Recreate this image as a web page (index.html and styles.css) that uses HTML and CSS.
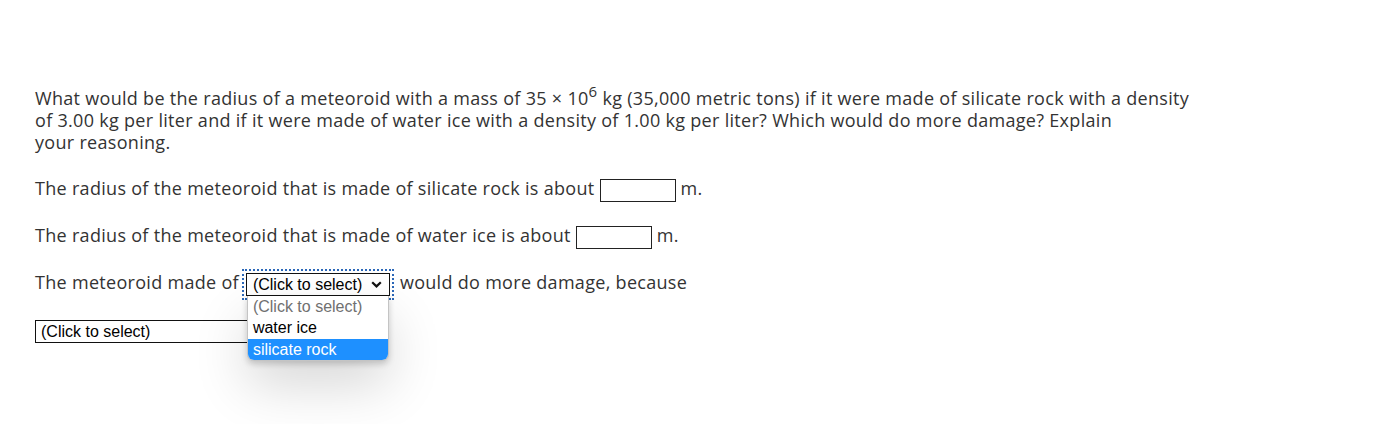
FILE: index.html
```html
<!DOCTYPE html>
<html lang="en">
<head>
    <meta charset="UTF-8">
    <title>Meteoroid question</title>
    <link rel="stylesheet" href="styles.css">
</head>
<body>
    <div class="question">
        <p class="prompt">
            What would be the radius of a meteoroid with a mass of 35 &times; 10<sup>6</sup> kg (35,000 metric tons) if it were made of silicate rock with a density
            of 3.00 kg per liter and if it were made of water ice with a density of 1.00 kg per liter? Which would do more damage? Explain<br>
            your reasoning.
        </p>

        <p class="line">
            The radius of the meteoroid that is made of silicate rock is about
            <input type="text" class="blank" id="rockRadius"> m.
        </p>

        <p class="line">
            The radius of the meteoroid that is made of water ice is about
            <input type="text" class="blank" id="iceRadius"> m.
        </p>

        <p class="line">
            The meteoroid made of
            <span class="select-wrap">
                <span class="select-box is-focused">
                    <span class="select-text">(Click to select)</span>
                    <svg class="chevron" width="11" height="7" viewBox="0 0 11 7">
                        <path d="M1.2 1.2 L5.5 5.4 L9.8 1.2" fill="none" stroke="#111" stroke-width="2.2"/>
                    </svg>
                </span>
                <span class="select-menu">
                    <span class="option placeholder">(Click to select)</span>
                    <span class="option">water ice</span>
                    <span class="option selected">silicate rock</span>
                </span>
            </span>
            would do more damage, because
        </p>

        <div class="select-box wide">
            <span class="select-text">(Click to select)</span>
        </div>
    </div>
</body>
</html>
```

FILE: styles.css
```css
body {
    margin: 0;
    min-height: 424px;
    background: #fff;
    font-family: 'Open Sans', 'Liberation Sans', Arial, sans-serif;
    font-size: 18px;
    letter-spacing: 0.3px;
    color: #333;
}

.question {
    padding: 87px 35px 80px;
}

.prompt {
    width: 1165px;
    margin: 0;
    line-height: 22px;
}

.prompt sup {
    font-size: 15px;
    line-height: 0;
    vertical-align: 8px;
}

.line {
    margin: 21px 0 0;
    line-height: 28px;
}

.line + .line {
    margin-top: 19px;
}

.blank {
    box-sizing: border-box;
    width: 76px;
    height: 23px;
    padding: 0 4px;
    border: 1px solid #222;
    border-radius: 0;
    vertical-align: middle;
    font: inherit;
}

.select-wrap {
    position: relative;
    display: inline-flex;
    margin: 0 5px 0 2px;
    vertical-align: middle;
}

.select-box {
    box-sizing: border-box;
    display: inline-flex;
    align-items: center;
    justify-content: space-between;
    width: 144px;
    height: 23px;
    padding: 0 7px 0 6px;
    border: 1px solid #111;
    background: #fff;
    font-family: 'Liberation Sans', Arial, sans-serif;
    font-size: 16px;
    letter-spacing: 0;
    line-height: 21px;
    color: #000;
}

.select-box.is-focused {
    outline: 2px dotted #2b67b8;
    outline-offset: 2px;
}

.select-box.wide {
    display: flex;
    width: 300px;
    margin-top: 24px;
    padding-left: 5px;
}

.chevron {
    display: block;
}

.select-menu {
    position: absolute;
    top: 23px;
    left: 1px;
    box-sizing: border-box;
    width: 142px;
    display: flex;
    flex-direction: column;
    background: #fff;
    border: 1px solid #c4c4c4;
    border-top: none;
    border-radius: 0 0 7px 7px;
    overflow: hidden;
    box-shadow: 0 3px 6px rgba(0,0,0,0.18), 0 24px 54px rgba(0,0,0,0.16);
    z-index: 2;
    font-family: 'Liberation Sans', Arial, sans-serif;
    font-size: 16px;
    letter-spacing: 0;
    line-height: 21.5px;
    color: #000;
}

.option {
    padding: 0 5px;
    white-space: nowrap;
}

.option.placeholder {
    color: #707070;
}

.option.selected {
    background: #1e90ff;
    color: #fff;
}
```
